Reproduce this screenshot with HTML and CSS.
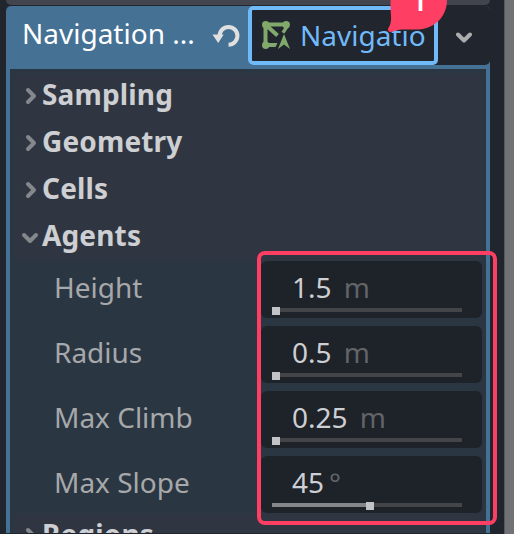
FILE: index.html
```html
<!DOCTYPE html>
<html lang="en">
<head>
<meta charset="utf-8">
<title>Inspector</title>
<link rel="stylesheet" href="styles.css">
</head>
<body>
<div class="inspector">
  <div class="previous"></div>
  <header class="property">
    <span class="property-name">Navigation ...</span>
    <svg class="revert" width="30" height="28" viewBox="0 0 30 28"><path d="M8 15.500A10 10 0 1 1 18 25.500" fill="none" stroke="#e0e0e0" stroke-width="4.500" transform="translate(2.500 2) scale(.89)"/><path d="M2.500 14.500H13.700L8.200 23Z" fill="#e0e0e0"/></svg>
    <div class="resource">
      <div class="resource-button">
        <svg class="mesh-icon" width="28" height="28" viewBox="0 0 28 28"><g fill="none" stroke="#80a96b" stroke-width="4"><path d="M24 3.500H3.500V24M5 5L15.500 14.500M3.500 24H12"/></g><g fill="#80a96b"><circle cx="3.700" cy="3.700" r="3.700"/><circle cx="24.200" cy="3.700" r="3.700"/><circle cx="3.700" cy="24.200" r="3.700"/><path d="M22 7H26L22.500 12.500L19.500 11ZM22 13L28 28L22 23.500L16 28ZM11 22L15.500 22L13.500 26H11Z"/></g></svg>
        <span class="resource-name">Navigatio</span>
      </div>
      <svg class="menu-arrow" width="18" height="12" viewBox="0 0 18 12"><path d="M3 2.500L9 8.500L15 2.500" fill="none" stroke="#acacad" stroke-width="4" stroke-linecap="round" stroke-linejoin="round"/></svg>
    </div>
  </header>
  <main class="panel">
    <div class="section"><svg class="fold" width="20" height="18" viewBox="0 0 20 18"><path d="M8 3L14 9L8 15"/></svg>Sampling</div>
    <div class="section"><svg class="fold" width="20" height="18" viewBox="0 0 20 18"><path d="M8 3L14 9L8 15"/></svg>Geometry</div>
    <div class="section"><svg class="fold" width="20" height="18" viewBox="0 0 20 18"><path d="M8 3L14 9L8 15"/></svg>Cells</div>
    <div class="section"><svg class="fold" width="20" height="18" viewBox="0 0 20 18"><path d="M4 7L10 13L16 7"/></svg>Agents</div>
    <div class="fields">
      <div class="row"><span class="label">Height</span><div class="field"><div class="value">1.5<span class="unit">&nbsp;m</span></div><div class="slider"><i class="thumb"></i></div></div></div>
      <div class="row"><span class="label">Radius</span><div class="field"><div class="value">0.5<span class="unit">&nbsp;m</span></div><div class="slider"><i class="thumb"></i></div></div></div>
      <div class="row"><span class="label">Max Climb</span><div class="field"><div class="value">0.25<span class="unit">&nbsp;m</span></div><div class="slider"><i class="thumb"></i></div></div></div>
      <div class="row"><span class="label">Max Slope</span><div class="field"><div class="value">45<span class="unit">°</span></div><div class="slider"><i class="fill"></i><i class="thumb"></i></div></div></div>
    </div>
    <div class="section"><svg class="fold" width="20" height="18" viewBox="0 0 20 18"><path d="M8 3L14 9L8 15"/></svg>Regions</div>
  </main>
</div>
<div class="scrollbar"></div>
<div class="highlight"></div>
<div class="badge">
  <svg class="badge-shape" width="60" height="64" viewBox="0 0 60 64"><path d="M31 3C47 3 59 16 59 32C59 49 46 61 30 61.500C21 61.700 15 61 10 62C7 62.700 5 63.800 2.500 64C0 63.800 -.500 62 .500 60C2.500 56 3.500 53 3 48C2.700 44 2.500 38 2.500 32C2.500 16 15 3 31 3Z" fill="#ff3e63"/></svg>
  <span class="badge-number">1</span>
</div>
</body>
</html>
```

FILE: styles.css
```css
* { box-sizing: border-box; }

body {
  position: relative;
  display: flex;
  width: 514px;
  height: 534px;
  margin: 0;
  overflow: hidden;
  background: #21252e;
  color: #cdcfd2;
  font: 28px/38px "Noto Sans", sans-serif;
}

.inspector {
  width: 484px;
  margin-left: 6px;
}

.previous {
  height: 5px;
  background: #42454d;
  border-radius: 0 0 5px 5px;
}

.property {
  display: flex;
  height: 60px;
  margin-top: 1px;
  padding-left: 16px;
  background: #457195;
  border-radius: 5px 5px 0 0;
  color: #fff;
}

.property-name {
  width: 188px;
  padding-top: 8px;
  white-space: nowrap;
}

.revert {
  flex: none;
  margin-top: 14px;
}

.resource {
  display: flex;
  flex: none;
  width: 242px;
  height: 59px;
  margin-left: 8px;
  background: #21252e;
  border-radius: 5px;
}

.resource-button {
  display: flex;
  width: 190px;
  height: 59px;
  padding: 6px 0 0 10px;
  border: 4px solid #70bafa;
  border-radius: 5px;
  color: #70bafa;
}

.mesh-icon {
  margin-top: 5px;
}

.resource-name {
  margin-left: 10px;
}

.menu-arrow {
  margin: 26px 0 0 17px;
}

.panel {
  height: 468px;
  margin-top: -1px;
  padding: 4px 4px 0;
  overflow: hidden;
  background: #2b3643;
  border: solid #457195;
  border-width: 4px 4px 0;
}

.section {
  display: flex;
  gap: 2px;
  height: 47px;
  padding: 2px 0 0 8px;
  background: #303641;
  font-weight: 700;
  letter-spacing: .15px;
}

.fold {
  flex: none;
  margin: 12px 0 0 -2px;
  overflow: visible;
  fill: none;
  stroke: #84878c;
  stroke-width: 4;
  stroke-linecap: round;
  stroke-linejoin: round;
}

.fields {
  display: grid;
  gap: 8px;
}

.row {
  display: flex;
  height: 57px;
}

.label {
  width: 247px;
  padding: 7px 0 0 40px;
  color: #a6a8aa;
}

.field {
  flex: 1;
  padding: 7px 20px 0 11px;
  background: #1e2229;
  border-radius: 6px;
}

.value {
  padding-left: 20px;
}

.unit {
  margin-left: 5px;
  color: #626468;
}

.slider {
  display: flex;
  height: 4px;
  margin-top: 2px;
  background: #444549;
}

.fill {
  width: 94px;
  background: #85868a;
}

.thumb {
  width: 8px;
  height: 8px;
  margin-top: -1px;
  background: #c1c3c6;
}

.scrollbar {
  width: 10px;
  margin-left: 14px;
  background: #717276;
  border-left: 1px solid #57595f;
}

.highlight {
  position: absolute;
  top: 251px;
  left: 257px;
  width: 240px;
  height: 274px;
  border: 4px solid #ff3e63;
  border-radius: 8px;
}

.badge {
  position: absolute;
  top: -32px;
  left: 388px;
  width: 60px;
  height: 64px;
}

.badge-shape {
  display: block;
}

.badge-number {
  position: absolute;
  top: 15px;
  left: 23px;
  color: #fff;
  font: 500 30px/36px Roboto, sans-serif;
}
```
